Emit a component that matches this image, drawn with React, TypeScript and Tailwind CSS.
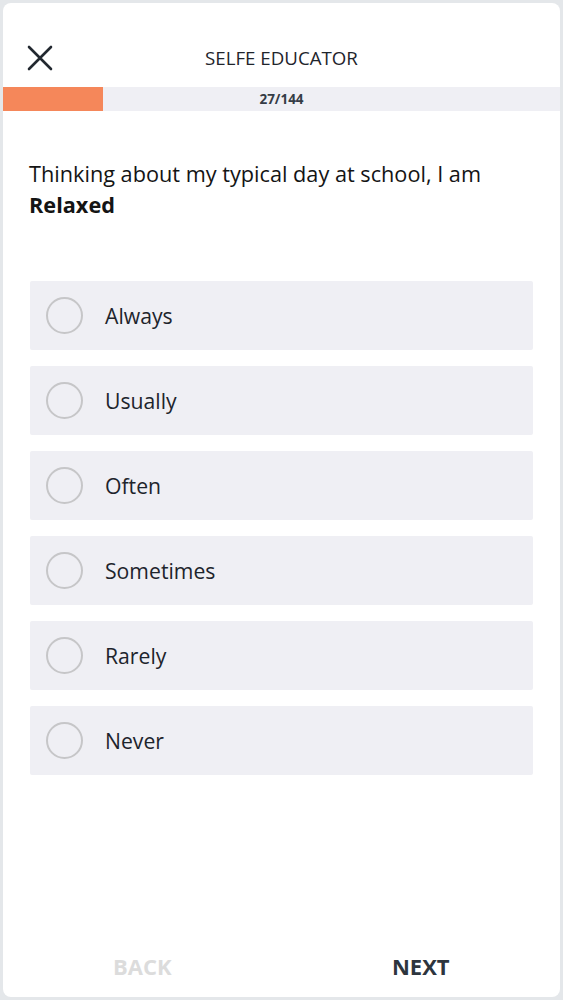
import React from "react";

const options = ["Always", "Usually", "Often", "Sometimes", "Rarely", "Never"];

export default function App() {
  return (
    <div
      className="h-[1000px] w-full bg-[#e4e7ea] p-[3px]"
      style={{ fontFamily: '"Open Sans", "Noto Sans", sans-serif' }}
    >
      <div className="flex h-[994px] flex-col overflow-hidden rounded-[8px] bg-white">
        {/* Header */}
        <div className="relative mt-[33px] mb-[7px] flex h-[44px] items-center justify-center">
          <button className="absolute left-[23px] top-[8px] flex h-[28px] w-[28px] items-center justify-center">
            <svg width="26" height="26" viewBox="0 0 26 26" fill="none">
              <path
                d="M2 2L24 24M24 2L2 24"
                stroke="#222830"
                strokeWidth="2.6"
                strokeLinecap="round"
              />
            </svg>
          </button>
          <div className="text-[18.7px] text-[#1f252c]">SELFE EDUCATOR</div>
        </div>

        {/* Progress */}
        <div className="relative flex h-[24px] items-center justify-center bg-[#efeff4]">
          <div className="absolute left-0 top-0 h-full w-[100px] bg-[#f5875a]" />
          <span className="relative text-[13.5px] font-bold text-[#353c45]">27/144</span>
        </div>

        {/* Question */}
        <div className="px-[26px] pt-[47px] text-[21.7px] leading-[31px] text-[#141414]">
          Thinking about my typical day at school, I am
          <br />
          <span className="font-bold">Relaxed</span>
        </div>

        {/* Options */}
        <div className="mt-[61px] flex flex-col gap-[16px] px-[27px]">
          {options.map((o) => (
            <div
              key={o}
              className="flex h-[69px] items-center rounded-[2px] bg-[#efeff4] pl-[16px]"
            >
              <div className="h-[37px] w-[37px] rounded-full border-[2.5px] border-[#c6c6c8]" />
              <span className="ml-[22px] text-[21.2px] text-[#1d242c]">{o}</span>
            </div>
          ))}
        </div>

        <div className="flex-1" />

        {/* Footer */}
        <div className="mb-[11px] flex h-[40px] items-center">
          <div className="flex flex-1 justify-center text-[22px] font-bold text-[#dcdcdc]">BACK</div>
          <div className="flex flex-1 justify-center text-[22px] font-bold text-[#2d353e]">NEXT</div>
        </div>
      </div>
    </div>
  );
}
